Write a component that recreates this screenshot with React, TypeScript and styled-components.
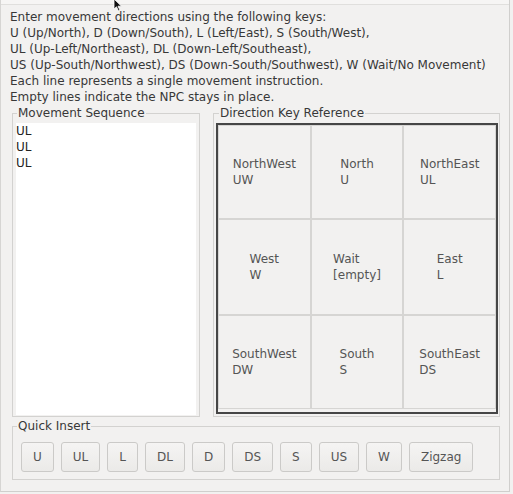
import React from "react";
import styled, { createGlobalStyle } from "styled-components";

const Global = createGlobalStyle`
  html, body { margin: 0; padding: 0; background: #f2f1f0; }
  body { font-family: "DejaVu Sans", sans-serif; font-size: 12px; color: #333; }
`;

const Window = styled.div`
  position: relative;
  width: 510px;
  height: 492px;
  box-sizing: border-box;
  border-left: 1px solid #d6d5d3;
  border-right: 1px solid #d0cfcd;
  border-bottom: 1px solid #d0cfcd;
  background: #f2f1f0;
  display: flex;
  flex-direction: column;
`;

const TopStrip = styled.div`
  height: 4px;
  background: #f6f5f4;
  border-bottom: 1px solid #e0dfdd;
`;

const Body = styled.div`
  display: flex;
  flex-direction: column;
  padding: 4px 9px 0 11px;
`;

const Instructions = styled.div`
  margin-left: -2px;
  line-height: 16px;
  white-space: pre;
  color: #383838;
`;

const Row = styled.div`
  display: flex;
  gap: 13px;
`;

const Frame = styled.fieldset<{ $w: number }>`
  margin: 0;
  width: ${(p) => p.$w}px;
  box-sizing: border-box;
  border: 1px solid #d3d2d0;
  padding: 2px 2px 1px 3px;
  min-width: 0;
`;

const Legend = styled.legend<{ $ml: number }>`
  padding: 0 1px;
  margin-left: ${(p) => p.$ml}px;
  line-height: 16px;
  font-size: 12px;
  color: #383838;
`;

const Sequence = styled.textarea`
  display: block;
  width: 180px;
  height: 292px;
  box-sizing: border-box;
  border: none;
  outline: none;
  resize: none;
  background: #fff;
  padding: 0;
  margin: 0;
  font-family: "DejaVu Sans", sans-serif;
  font-size: 12px;
  line-height: 16px;
  color: #222;
  overflow: hidden;
`;

const KeyGrid = styled.div`
  display: grid;
  grid-template-columns: repeat(3, 1fr);
  grid-template-rows: 94px 96px 94px;
  border: 2px solid #464646;
  width: 282px;
  height: 291px;
  box-sizing: border-box;
  margin-left: -1px;
`;

const Cell = styled.div`
  border: 1px solid #d6d5d3;
  display: flex;
  align-items: center;
  justify-content: center;
  text-align: left;
  line-height: 16px;
  color: #555;
  white-space: pre;
`;

const QuickFrame = styled.fieldset`
  margin: 1px 0 0 0;
  width: 488px;
  box-sizing: border-box;
  border: 1px solid #d3d2d0;
  padding: 8px 8px 7px 8px;
  display: flex;
  gap: 7px;
`;

const Btn = styled.button`
  height: 30px;
  padding: 0 11px;
  border: 1px solid #cbcac8;
  border-radius: 3px;
  background: linear-gradient(#f5f4f3, #ebeae8);
  font-family: "DejaVu Sans", sans-serif;
  font-size: 12px;
  color: #555;
  cursor: pointer;
`;

const Cursor = styled.svg`
  position: absolute;
  left: 112px;
  top: -1px;
`;

const cells = [
  "NorthWest\nUW",
  "North\nU",
  "NorthEast\nUL",
  "West\nW",
  "Wait\n[empty]",
  "East\nL",
  "SouthWest\nDW",
  "South\nS",
  "SouthEast\nDS",
];

const buttons = ["U", "UL", "L", "DL", "D", "DS", "S", "US", "W", "Zigzag"];

export default function App() {
  return (
    <>
      <Global />
      <Window>
        <TopStrip />
        <Body>
          <Instructions>
            {`Enter movement directions using the following keys:
U (Up/North), D (Down/South), L (Left/East), S (South/West),
UL (Up-Left/Northeast), DL (Down-Left/Southeast),
US (Up-South/Northwest), DS (Down-South/Southwest), W (Wait/No Movement)
Each line represents a single movement instruction.
Empty lines indicate the NPC stays in place.`}
          </Instructions>
          <Row>
            <Frame $w={188}>
              <Legend $ml={1}>Movement Sequence</Legend>
              <Sequence readOnly value={"UL\nUL\nUL"} />
            </Frame>
            <Frame $w={287}>
              <Legend $ml={2}>Direction Key Reference</Legend>
              <KeyGrid>
                {cells.map((c) => (
                  <Cell key={c}>{c}</Cell>
                ))}
              </KeyGrid>
            </Frame>
          </Row>
          <QuickFrame>
            <Legend $ml={-4}>Quick Insert</Legend>
            {buttons.map((b) => (
              <Btn key={b}>{b}</Btn>
            ))}
          </QuickFrame>
        </Body>
        <Cursor width="10" height="14" viewBox="0 0 10 14">
          <path d="M1 0 L1 10 L3.5 7.8 L5.5 12 L7 11.3 L5 7.2 L8.5 7.2 Z" fill="#111" stroke="#fff" strokeWidth="0.8" />
        </Cursor>
      </Window>
    </>
  );
}
